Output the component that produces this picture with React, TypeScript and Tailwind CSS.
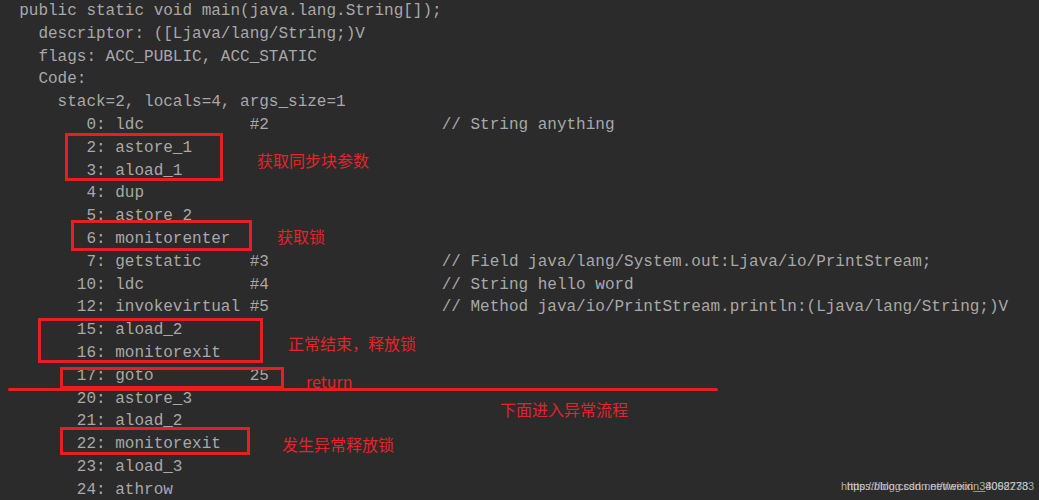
import React from "react";

type Row = [string, string, string?, string?];

const header = [
  "  public static void main(java.lang.String[]);",
  "    descriptor: ([Ljava/lang/String;)V",
  "    flags: ACC_PUBLIC, ACC_STATIC",
  "    Code:",
  "      stack=2, locals=4, args_size=1",
];

const rows: Row[] = [
  ["0", "ldc", "#2", "// String anything"],
  ["2", "astore_1"],
  ["3", "aload_1"],
  ["4", "dup"],
  ["5", "astore_2"],
  ["6", "monitorenter"],
  ["7", "getstatic", "#3", "// Field java/lang/System.out:Ljava/io/PrintStream;"],
  ["10", "ldc", "#4", "// String hello word"],
  ["12", "invokevirtual", "#5", "// Method java/io/PrintStream.println:(Ljava/lang/String;)V"],
  ["15", "aload_2"],
  ["16", "monitorexit"],
  ["17", "goto", "25"],
  ["20", "astore_3"],
  ["21", "aload_2"],
  ["22", "monitorexit"],
  ["23", "aload_3"],
  ["24", "athrow"],
];

function formatRow([idx, op, arg, comment]: Row) {
  let s = idx.padStart(10) + ": " + op;
  if (arg) s = s.padEnd(25) + " " + arg;
  if (comment) s = s.padEnd(46) + comment;
  return s;
}

const lines = [...header, ...rows.map(formatRow)];

// red boxes drawn over the listing: left, top, width, height
const boxes = [
  "left-[65px] top-[133px] w-[158px] h-[48px]",
  "left-[71px] top-[220px] w-[181px] h-[31px]",
  "left-[38px] top-[318px] w-[225px] h-[45px]",
  "left-[60px] top-[367px] w-[224px] h-[22px]",
  "left-[60px] top-[427px] w-[190px] h-[28px]",
];

const notes = [
  { text: "获取同步块参数", cls: "left-[257px] top-[149px]" },
  { text: "获取锁", cls: "left-[277px] top-[225px]" },
  { text: "正常结束，释放锁", cls: "left-[288px] top-[332px]" },
  { text: "return", cls: "left-[306px] top-[370px]" },
  { text: "下面进入异常流程", cls: "left-[500px] top-[398px]" },
  { text: "发生异常释放锁", cls: "left-[282px] top-[433px]" },
];

export default function App() {
  return (
    <div className="relative w-[1039px] h-[500px] overflow-hidden bg-[#2b2b2b]">
      <div className="font-['Liberation_Mono',monospace] text-[16px] leading-[22.8px] text-[#a8a8a8]">
        {lines.map((l, i) => (
          <div key={i} className="whitespace-pre h-[22.8px]">
            {l}
          </div>
        ))}
      </div>

      {boxes.map((b, i) => (
        <div key={i} className={"absolute border-[3px] border-[#e81e25] " + b} />
      ))}
      <div className="absolute left-[8px] top-[388px] w-[710px] h-[3px] rounded-full bg-[#e81e25]" />

      {notes.map((n, i) => (
        <div
          key={i}
          className={
            "absolute whitespace-nowrap font-['Noto_Sans_CJK_SC',sans-serif] text-[16px] leading-[22px] text-[#e4232b] " +
            n.cls
          }
        >
          {n.text}
        </div>
      ))}

      <div className="absolute left-[841px] top-[479px] font-['Liberation_Sans',sans-serif] text-[11px] leading-[14px] text-[#d0d0d0]/80 whitespace-nowrap">
        <span>https://blog.csdn.net/weixin_38062738</span>
        <span className="absolute left-[6px] top-0">https://blog.csdn.net/weixin_40982733</span>
      </div>
    </div>
  );
}
